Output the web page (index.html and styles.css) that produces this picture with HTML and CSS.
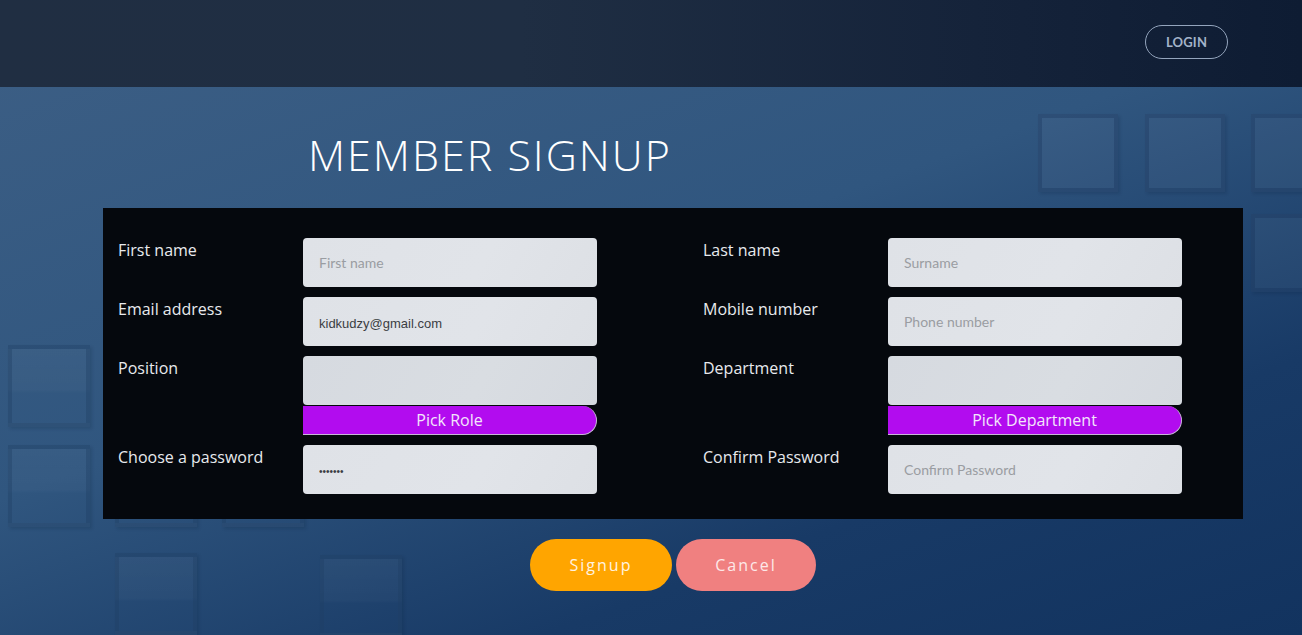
FILE: index.html
```html
<!DOCTYPE html>
<html>
<head>
<meta charset="utf-8">
<title>Member Signup</title>
<link rel="stylesheet" href="styles.css">
</head>
<body>
<div class="page">
  <div class="decor" aria-hidden="true">
    <span class="sq sq-h1"></span>
    <span class="sq sq-h2"></span>
    <span class="sq sq-1"></span>
    <span class="sq sq-2"></span>
    <span class="sq sq-3"></span>
    <span class="sq sq-4"></span>
    <span class="sq sq-5"></span>
    <span class="sq sq-6"></span>
    <span class="sq sq-7"></span>
    <span class="sq sq-8"></span>
    <span class="sq sq-9"></span>
    <span class="sq sq-10"></span>
  </div>
  <header class="topbar">
    <button class="login">LOGIN</button>
  </header>
  <main class="main">
    <h1 class="title">MEMBER SIGNUP</h1>
    <form class="panel">
      <div class="row">
        <div class="field">
          <label class="label">First name</label>
          <input class="input" type="text" placeholder="First name">
        </div>
        <div class="field">
          <label class="label">Last name</label>
          <input class="input" type="text" placeholder="Surname">
        </div>
      </div>
      <div class="row">
        <div class="field">
          <label class="label">Email address</label>
          <input class="input input-filled" type="text" value="kidkudzy@gmail.com">
        </div>
        <div class="field">
          <label class="label">Mobile number</label>
          <input class="input" type="text" placeholder="Phone number">
        </div>
      </div>
      <div class="row">
        <div class="field">
          <label class="label">Position</label>
          <div class="picker">
            <input class="input input-dim" type="text">
            <button type="button" class="pick">Pick Role</button>
          </div>
        </div>
        <div class="field">
          <label class="label">Department</label>
          <div class="picker">
            <input class="input input-dim" type="text">
            <button type="button" class="pick">Pick Department</button>
          </div>
        </div>
      </div>
      <div class="row">
        <div class="field">
          <label class="label">Choose a password</label>
          <input class="input input-filled input-pass" type="password" value="1234567">
        </div>
        <div class="field">
          <label class="label">Confirm Password</label>
          <input class="input" type="password" placeholder="Confirm Password">
        </div>
      </div>
    </form>
    <div class="actions">
      <button type="button" class="btn btn-signup">Signup</button>
      <button type="button" class="btn btn-cancel">Cancel</button>
    </div>
  </main>
</div>
</body>
</html>
```

FILE: styles.css
```css
* { box-sizing: border-box; }
html, body { margin: 0; padding: 0; }
body {
  width: 1302px;
  height: 635px;
  overflow: hidden;
  font-family: "Open Sans", "Noto Sans", sans-serif;
  background: #1e3a60;
}
.page {
  position: relative;
  width: 1302px;
  height: 635px;
  background: linear-gradient(160deg, #3d5f85 0%, #30567f 45%, #183a66 75%, #12335f 100%);
  overflow: hidden;
}
.decor {
  position: absolute;
  inset: 0;
  z-index: 0;
}
.sq {
  position: absolute;
  width: 82px;
  height: 82px;
  border: 4px solid rgba(32, 62, 100, 0.38);
  background: linear-gradient(180deg, rgba(255,255,255,0.035) 0%, rgba(255,255,255,0.025) 55%, rgba(255,255,255,0.0) 60%);
  box-shadow: 2px 2px 3px rgba(10, 25, 50, 0.15);
}
.sq-h1 { left: 1147px; top: 8px; width: 78px; height: 75px; border-color: rgba(0,0,0,0.06); background: rgba(255,255,255,0.015); box-shadow: none; z-index: 2; }
.sq-h2 { left: 1020px; top: 8px; width: 78px; height: 75px; border-color: rgba(0,0,0,0.05); background: rgba(255,255,255,0.01); box-shadow: none; z-index: 2; }
.sq-1 { left: 8px; top: 345px; }
.sq-2 { left: 8px; top: 445px; }
.sq-3 { left: 115px; top: 445px; }
.sq-4 { left: 222px; top: 445px; }
.sq-5 { left: 115px; top: 553px; }
.sq-6 { left: 320px; top: 555px; }
.sq-7, .sq-8, .sq-9, .sq-10 {
  width: 80px;
  height: 78px;
  border-color: rgba(20,45,85,0.3);
  background: rgba(255,255,255,0.04);
  box-shadow: 2px 2px 3px rgba(5, 20, 45, 0.15);
}
.sq-7 { left: 1038px; top: 114px; }
.sq-8 { left: 1145px; top: 114px; }
.sq-9 { left: 1251px; top: 114px; }
.sq-10 { left: 1251px; top: 214px; }

.topbar {
  position: relative;
  z-index: 1;
  height: 87px;
  background: linear-gradient(90deg, #202e42 0%, #1f2e43 40%, #15233a 75%, #0e1c33 100%);
  display: flex;
  justify-content: flex-end;
  align-items: flex-start;
  padding: 25px 74px 0 0;
}
.login {
  position: relative;
  z-index: 3;
  width: 83px;
  height: 34px;
  border: 1px solid #94a5bd;
  border-radius: 17px;
  background: transparent;
  color: #a3b3c9;
  font-family: "Lato", "Open Sans", sans-serif;
  font-weight: 700;
  font-size: 13px;
  letter-spacing: 0.2px;
  padding: 0;
}
.main {
  position: relative;
  z-index: 1;
  padding: 0 0 0 103px;
}
.title {
  margin: 0;
  padding: 43px 0 0 205px;
  height: 121px;
  font-family: "Open Sans", sans-serif;
  font-weight: 300;
  font-size: 43px;
  line-height: 50px;
  color: #ffffff;
  letter-spacing: 2px;
}
.panel {
  width: 1140px;
  height: 311px;
  background: #05080d;
  padding: 30px 15px 25px 15px;
  display: flex;
  flex-direction: column;
  gap: 10px;
}
.row {
  display: flex;
  gap: 106px;
}
.field {
  display: grid;
  grid-template-columns: 185px 294px;
  align-items: start;
}
.label {
  color: #e8eaed;
  font-size: 16px;
  line-height: 22px;
  padding-top: 1px;
}
.input {
  display: block;
  width: 294px;
  height: 49px;
  border: none;
  border-radius: 4px;
  background: linear-gradient(120deg, #dfe2e7 0%, #e1e4e9 60%, #dde0e5 100%);
  padding: 0 16px;
  font-family: "Lato", "Open Sans", sans-serif;
  font-size: 14px;
  color: #333;
  outline: none;
}
.input::placeholder {
  color: #9a9da2;
  font-family: "Lato", "Open Sans", sans-serif;
}
.input-filled {
  font-family: "Liberation Sans", Arial, sans-serif;
  font-size: 13px;
  color: #3b3e43;
  padding-top: 3px;
}
.input-pass {
  font-size: 10px;
  letter-spacing: 0px;
}
.input-dim {
  background: linear-gradient(120deg, #d6dae0 0%, #d9dde2 60%, #d5d9df 100%);
}
.picker {
  display: flex;
  flex-direction: column;
  gap: 1px;
}
.pick {
  display: block;
  width: 294px;
  height: 29px;
  border: 1px solid #c9b6d8;
  border-left: none;
  border-top: none;
  border-radius: 0 15px 15px 0;
  background: #b20cef;
  color: #f2e6fb;
  font-family: "Open Sans", sans-serif;
  font-size: 16px;
  line-height: 27px;
  padding: 0;
}
.actions {
  width: 1140px;
  display: flex;
  justify-content: center;
  gap: 4px;
  padding-top: 20px;
}
.btn {
  height: 52px;
  border: none;
  border-radius: 26px;
  color: #fff3e0;
  font-family: "Open Sans", sans-serif;
  font-size: 16px;
  letter-spacing: 2px;
  padding: 0;
}
.btn-signup { width: 142px; background: #ffa500; }
.btn-cancel { width: 140px; background: #f08080; color: #fde8e8; }
```
